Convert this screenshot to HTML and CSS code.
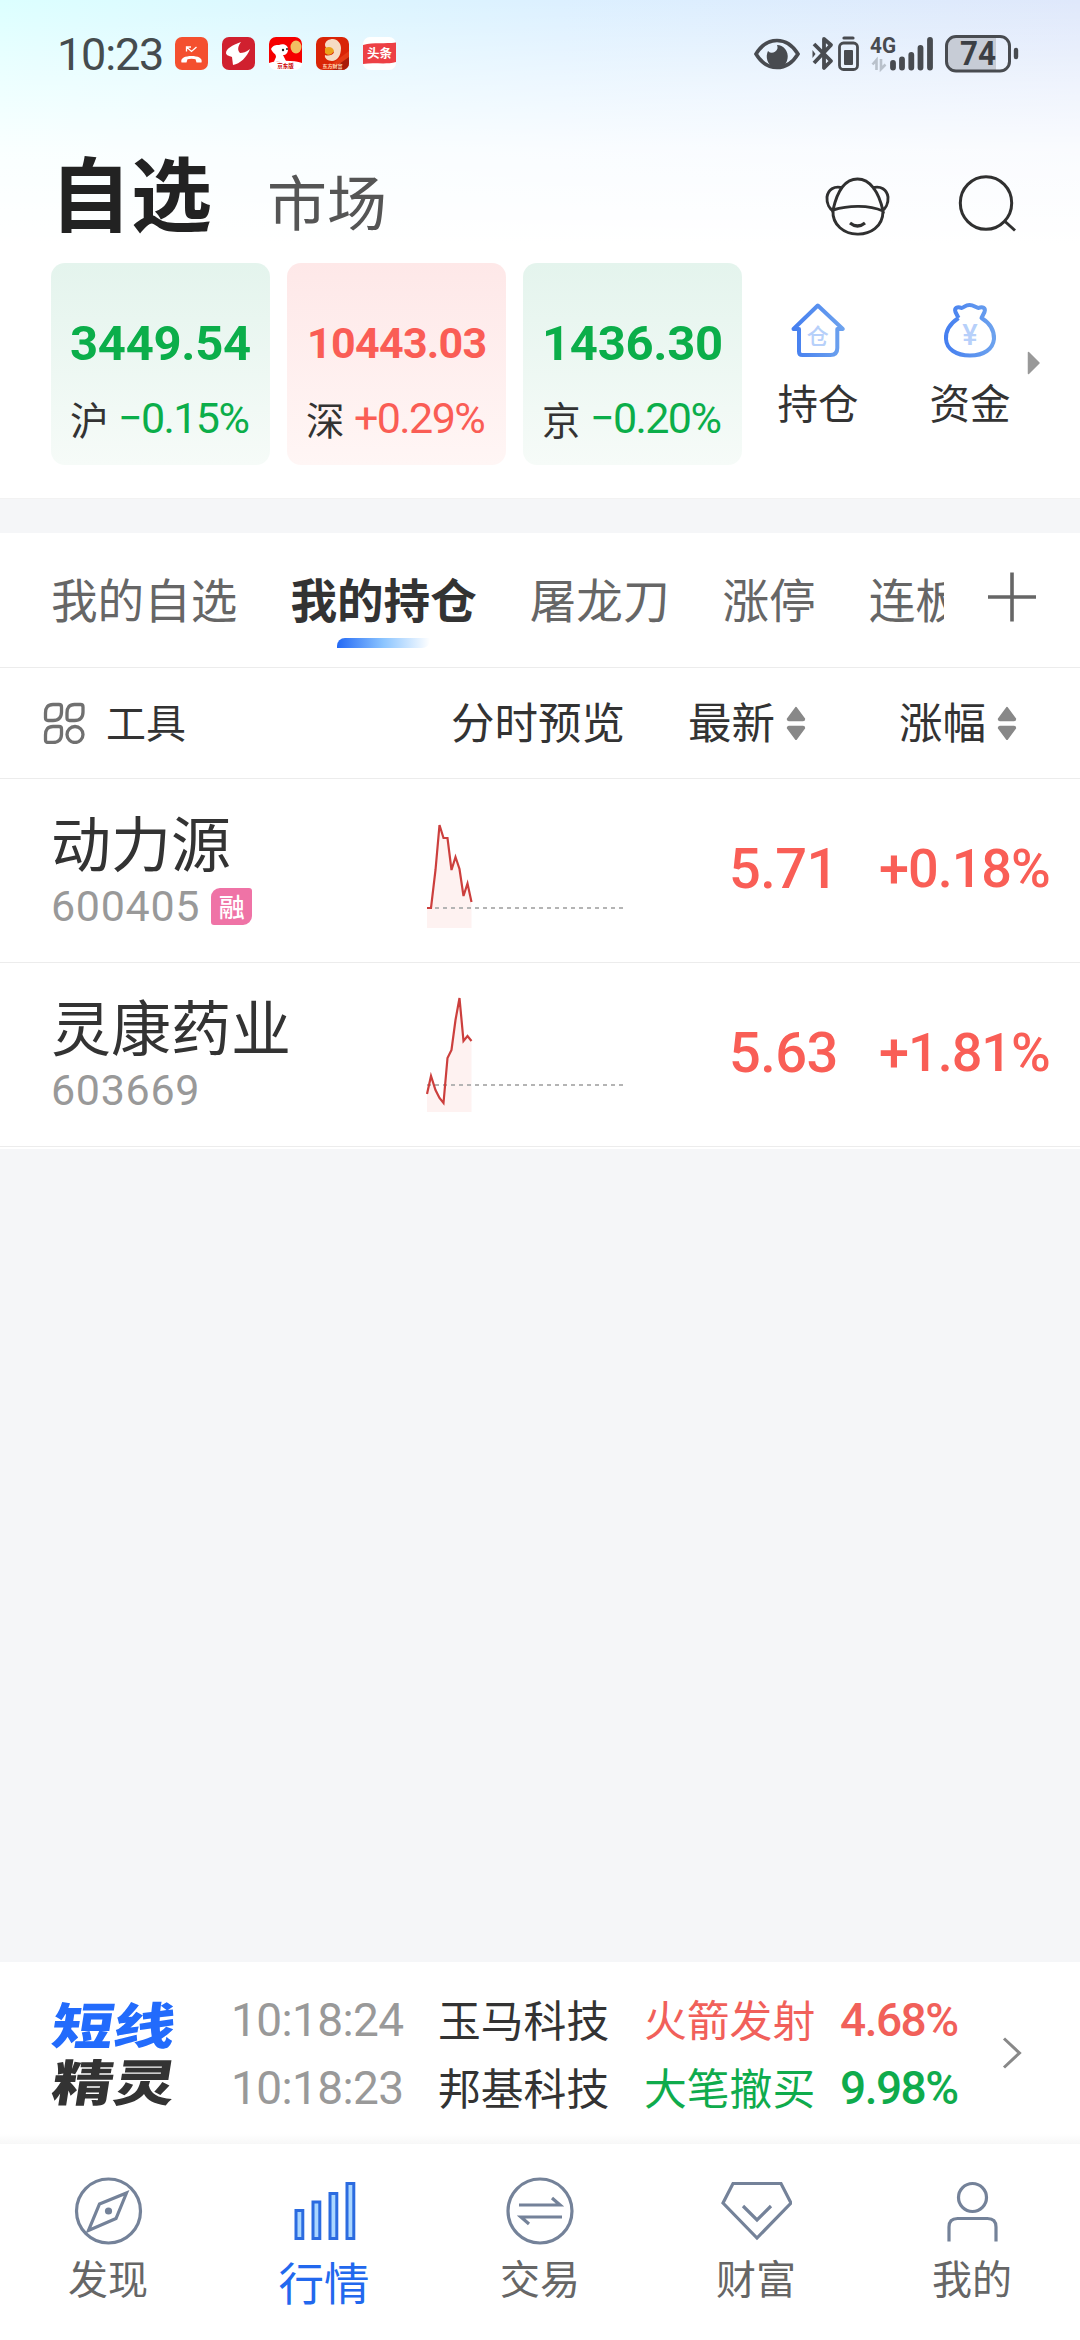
FILE: index.html
```html
<!DOCTYPE html>
<html lang="zh-CN">
<head>
<meta charset="utf-8">
<title>自选</title>
<link rel="stylesheet" href="styles.css">
</head>
<body>
<div class="app">
  <section class="top">
    <div class="status">
      <span class="clock num">10:23</span>
      <div class="notices">
        <svg width="33" height="33" viewBox="0 0 33 33"><rect width="33" height="33" rx="7" fill="#f4502f"/><path d="M11.5 14.500V10h4.500M12 10.500l4.500 4 5-4.500" fill="none" stroke="#fff" stroke-width="1.300"/><path d="M6.500 25.500c-1.500-4.500 4-6.500 10-6.500s11.500 2 10 6.500h-5l-1-3.200c-2-.8-6-.8-8 0l-1 3.200z" fill="#fff"/></svg>
        <svg width="33" height="33" viewBox="0 0 33 33"><rect width="33" height="33" rx="7" fill="#d0202f"/><path d="M19 5C10 8 4 12 4 16c0 2 3 3 6 4l1 8c7-1 14-8 17-16-4 3-7 4-10 4-3-3-2-7 1-11z" fill="#fff"/></svg>
        <svg width="33" height="33" viewBox="0 0 33 33"><rect width="33" height="33" rx="7" fill="#fff"/><path d="M0 26V7a7 7 0 0 1 7-7h19a7 7 0 0 1 7 7v19c-8-3-25-3-33 0z" fill="#f50000"/><path d="M2 12c2-4 5-4 8-4 4-2 9 0 9 4s-2 6-5 6l3 6H8l-2 2c-2-1 0-3 1-6 0-4-3-3-5-8z" fill="#fff"/><ellipse cx="27" cy="10" rx="5.500" ry="6.500" fill="#f2bf62"/><circle cx="14" cy="13" r="1.200" fill="#222"/><circle cx="18" cy="12" r="1" fill="#222"/><text x="16.500" y="30.500" class="logo-text" font-size="5.500" fill="#c00">京东版</text></svg>
        <svg width="33" height="33" viewBox="0 0 33 33"><rect width="33" height="33" rx="7" fill="#d92406"/><path d="M33 15v11a7 7 0 0 1-7 7h-9z" fill="#a91c08"/><path d="M33 14v6L16 32H9z" fill="#e43a14"/><path d="M9 8c0-4 4-6 8-6s8 4 8 9c0 8-4 13-9 13-4 0-8-3-7-6 2 1 8 1 9-3-2-3-9-2-9-7z" fill="#f6dcc4"/><path d="M9 11c4-2 8-1 9 3-2 4-6 5-9 2z" fill="#eba31c"/><text x="16.500" y="31" class="logo-text" font-size="5" fill="#ffd9b8">东方财富</text></svg>
        <svg width="33" height="33" viewBox="0 0 33 33"><rect width="33" height="33" rx="7" fill="#fff"/><path d="M0 8c11-3 22-1 33-2.500V25c-11 3-22 0-33 2z" fill="#ed4045"/><text x="16.500" y="21" class="logo-text" font-size="12.500" fill="#fff">头条</text></svg>
      </div>
      <svg class="sys" width="268" height="40" viewBox="752 34 268 40" fill="none" stroke="#484b50">
        <path d="M756 54c11-18 31-18 42 0-11 18-31 18-42 0z" stroke-width="3.600"/>
        <path d="M777 45a10.500 11.500 0 1 1-9 6 5.500 5.500 0 0 0 9-6z" fill="#484b50" stroke="none"/>
        <path d="M814 44l17 17-7 7V39l7 6-17 18" stroke-width="3.800" stroke-linejoin="round"/><path d="M812.500 50v8l3-4z" fill="#484b50" stroke="none"/>
        <rect x="839.500" y="43" width="18" height="26.500" rx="4" stroke-width="2.800"/><path d="M844 38h9" stroke-width="3.200" stroke-linecap="round"/><rect x="844" y="50" width="9" height="15" rx="1" fill="#484b50" stroke="none"/>
        <text x="870" y="53" class="net-text" font-size="22" fill="#484b50" stroke="none" textLength="26" lengthAdjust="spacingAndGlyphs">4G</text>
        <path d="M876.500 70V60l-4 4.500M881 59v10l4.500-4.500" stroke="#b9c1cb" stroke-width="2.600"/>
        <g stroke-width="5.800" stroke-linecap="round"><path d="M893 63v4.500M902 59.500v8M911.300 55v12.500M920.500 48v19.500M930 40v27.500"/></g>
        <path d="M954 37h42v33.500h-42q-7.500 0-7.500-8v-17q0-8.500 7.500-8.500z" fill="#c7ccd6" stroke="none"/>
        <rect x="946.500" y="36.500" width="63" height="34.500" rx="9.500" stroke-width="3"/><path d="M1016 50v7" stroke-width="4.400" stroke-linecap="round"/>
        <text x="960" y="65" class="net-text" font-size="33" fill="#3c3f44" stroke="none" textLength="36" lengthAdjust="spacingAndGlyphs">74</text>
      </svg>
    </div>
    <header class="header">
      <h1 class="title">自选</h1>
      <span class="subtitle">市场</span>
      <svg class="ic-face" width="66" height="62" viewBox="824 175 66 62" fill="none" stroke="#303030" stroke-width="2.900"><path d="M833 210c4-18 12-31 24.500-31S879 192 883 211c-14-6-34-6-50-1zM833 210c-2 31 50 33 50 1M843 188c-9-3-15 2-16 9-.500 7 3 12 6 14M872 188c9-3 15 2 16 9 .500 7-3 12-6 14"/><path d="M850 223q7.500 6 15 0" stroke-width="3.200"/></svg>
      <svg class="ic-search" width="58" height="58" viewBox="958 175 58 58" fill="none" stroke="#303030" stroke-width="3"><ellipse cx="986" cy="203" rx="25.700" ry="26.300"/><path d="M1004.500 221l10.500 9.500"/></svg>
    </header>
    <div class="indices">
      <div class="card down"><b class="num big">3449.54</b><div class="chg"><span class="mkt">沪</span><span class="num pct">−0.15%</span></div></div>
      <div class="card up"><b class="num big small">10443.03</b><div class="chg"><span class="mkt">深</span><span class="num pct">+0.29%</span></div></div>
      <div class="card down"><b class="num big">1436.30</b><div class="chg"><span class="mkt">京</span><span class="num pct">−0.20%</span></div></div>
      <div class="quick first">
        <svg width="56" height="58" viewBox="790 301 56 58" fill="none" stroke="url(#blue)" stroke-width="4" stroke-linejoin="round"><defs><linearGradient id="blue" gradientUnits="userSpaceOnUse" x1="792" y1="0" x2="844" y2="0"><stop stop-color="#447ef0"/><stop offset="1" stop-color="#6ea3ee"/></linearGradient></defs><path d="M817.800 305.500l25 23.500h-5.500v19q0 7-7 7h-28q-3.300 0-3.300-3.500V329h-5.500z"/><text x="817.800" y="343.500" class="mark" font-size="22">仓</text></svg>
        <span>持仓</span>
      </div>
      <div class="quick">
        <svg width="56" height="58" viewBox="942 301 56 58" fill="none" stroke="url(#blue2)" stroke-width="4" stroke-linejoin="round"><defs><linearGradient id="blue2" gradientUnits="userSpaceOnUse" x1="944" y1="0" x2="996" y2="0"><stop stop-color="#447ef0"/><stop offset="1" stop-color="#6ea3ee"/></linearGradient></defs><path d="M958.500 318l-3-6c-1.500-4 2-6 6-4 3-.500 3.500-3 8-3s5.500 2.500 9 3c4-2 7.500 0 6 4l-3 6c8 5 13 12 12.500 21-1 10-10 16.500-24 16.500s-23.500-6.500-24-16.500c-.500-9 5-16 12.500-21"/><text x="970" y="344.500" class="mark num" font-size="29">¥</text></svg>
        <span>资金</span>
      </div>
      <svg class="more" width="14" height="24" viewBox="0 0 14 24"><path d="M1.500 1.500v21L12 12z" fill="#999" stroke="#999" stroke-width="1.500" stroke-linejoin="round"/></svg>
    </div>
  </section>

  <nav class="tabs">
    <div class="tablist"><span>我的自选</span><span class="on">我的持仓</span><span>屠龙刀</span><span>涨停</span><span>连板</span></div>
    <svg width="50" height="50" viewBox="0 0 50 50"><path d="M1 25h48M25 .500v49" stroke="#666" stroke-width="3.600"/></svg>
  </nav>

  <div class="cols">
    <div class="tools"><svg width="42" height="42" viewBox="0 0 42 42" fill="none" stroke="#707070" stroke-width="3.300"><path id="leaf" d="M10 2.500h6q2.500 0 2.500 2.500v5q0 8.500-8.500 8.500H5q-2.500 0-2.500-2.500v-5q0-8.500 7.500-8.500z"/><use href="#leaf" x="21.500"/><use href="#leaf" y="22"/><circle cx="32" cy="32.500" r="8"/></svg><span>工具</span></div>
    <span class="preview">分时预览</span>
    <div class="sort">最新<svg width="20" height="34" viewBox="0 0 20 34"><path id="tri" d="M10 1.500L18.500 13q0 1.500-1.500 1.500H3q-1.500 0-1.500-1.500z" fill="#888" stroke="#888" stroke-width="1.400" stroke-linejoin="round"/><use href="#tri" transform="matrix(1 0 0 -1 0 35)"/></svg></div>
    <div class="sort last">涨幅<svg width="20" height="34" viewBox="0 0 20 34"><use href="#tri"/><use href="#tri" transform="matrix(1 0 0 -1 0 35)"/></svg></div>
  </div>

  <div class="stock">
    <div class="who"><div class="name">动力源</div><div class="code"><span class="num">600405</span><i class="tag">融</i></div></div>
    <svg class="spark" width="200" height="130" viewBox="426 810 200 130"><path d="M427 928V908h4l4.500-38 4-45 4 13h4l4 32 4-13 4 12 4 27 4-12.500 4 18.500v26z" fill="#fef2f1"/><path d="M427 908h197" stroke="#b4b4b4" stroke-width="2" stroke-dasharray="4 4"/><path d="M427 908h4l4.500-38 4-45 4 13h4l4 32 4-13 4 12 4 27 4-12.500 4 18.500" fill="none" stroke="#cc3f3d" stroke-width="2.200"/></svg>
    <span class="num price">5.71</span>
    <span class="num rate">+0.18%</span>
  </div>
  <div class="stock second">
    <div class="who"><div class="name">灵康药业</div><div class="code"><span class="num">603669</span></div></div>
    <svg class="spark" width="200" height="130" viewBox="426 994 200 130"><path d="M427 1112v-18l4-18 4.500 14 4 8 4 5 4-45 4-8 4-30 4-22 4 43 4-5 4 5v71z" fill="#fef2f1"/><path d="M427 1085h197" stroke="#b4b4b4" stroke-width="2" stroke-dasharray="4 4"/><path d="M427 1094l4-18 4.500 14 4 8 4 5 4-45 4-8 4-30 4-22 4 43 4-5 4 5" fill="none" stroke="#cc3f3d" stroke-width="2.200"/></svg>
    <span class="num price">5.63</span>
    <span class="num rate">+1.81%</span>
  </div>

  <div class="blank"></div>

  <section class="ticker">
    <div class="brand"><span class="b1">短线</span><span class="b2">精灵</span></div>
    <div class="feed">
      <div class="line"><span class="num time">10:18:24</span><span class="co">玉马科技</span><span class="ev red">火箭发射</span><span class="num val red">4.68%</span></div>
      <div class="line"><span class="num time">10:18:23</span><span class="co">邦基科技</span><span class="ev green">大笔撤买</span><span class="num val green">9.98%</span></div>
    </div>
    <svg class="chev" width="22" height="34" viewBox="0 0 22 34"><path d="M3 2.500L18.500 17 3 31.500" fill="none" stroke="#888" stroke-width="3"/></svg>
  </section>

  <nav class="bottom">
    <div class="item"><svg width="72" height="72" viewBox="0 0 72 72" fill="none" stroke="#748299" stroke-width="3.200"><circle cx="36.500" cy="36" r="32"/><path d="M54.500 18L44 43.500 16.500 55.500 27.500 29z"/><circle cx="36.500" cy="36" r="3.600" fill="#748299" stroke="none"/></svg><span>发现</span></div>
    <div class="item on"><svg width="72" height="72" viewBox="0 0 72 72" fill="#a9d6ff" stroke="#2b6be0" stroke-width="3"><path d="M8 35.500h6.800v28H8zM25 27h6.800v36.500H25zM42 18.500h6.800v45H42zM59 8.500h6.800v55H59z"/></svg><span>行情</span></div>
    <div class="item"><svg width="72" height="72" viewBox="0 0 72 72" fill="none" stroke="#748299" stroke-width="3.200"><circle cx="36" cy="36" r="32"/><path d="M15 30h41L48 23M58 42H17l8 7"/></svg><span>交易</span></div>
    <div class="item"><svg width="72" height="72" viewBox="0 0 72 72" fill="none" stroke="#748299" stroke-width="3.200"><path d="M13 8.500h48L71 28 37 63 3 28z"/><path d="M23 31l14 14 14-14"/></svg><span>财富</span></div>
    <div class="item"><svg width="72" height="72" viewBox="0 0 72 72" fill="none" stroke="#748299" stroke-width="3.200"><circle cx="36.500" cy="22.500" r="14"/><path d="M13 66.500V52q0-8.500 8.500-8.500h30q8.500 0 8.500 8.500v14.500"/></svg><span>我的</span></div>
  </nav>
</div>
</body>
</html>
```
FILE: styles.css
```css
* { box-sizing: border-box; }
body { margin: 0; background: #f5f6f8; }
.app {
  width: 1080px; height: 2340px; display: flex; flex-direction: column;
  font-family: "Noto Sans CJK SC", sans-serif; color: #333; background: #f5f6f8;
  overflow: hidden; white-space: nowrap; line-height: 1;
}
.num { font-family: Roboto, "Liberation Sans", sans-serif; }
svg { display: block; flex: none; }

.top {
  height: 499px; flex: none; display: flex; flex-direction: column;
  border-bottom: 1px solid #f2f2f2;
  background:
    linear-gradient(to bottom, rgba(255,255,255,0), rgba(255,255,255,.5) 85px, rgba(255,255,255,.84) 150px, #fff 245px),
    linear-gradient(to right, #dcffff 0, #dcf0ff 560px, #dfe8fb 1080px);
}
.status { height: 107px; display: flex; align-items: center; padding: 0 60px 0 57px; }
.clock { font-size: 45px; width: 118px; letter-spacing: -1.200px; color: #454c4e; padding-top: 2px; }
.notices { display: flex; gap: 14px; }
.logo-text { font-family: "Noto Sans CJK SC", sans-serif; font-weight: 700; text-anchor: middle; }
.net-text { font-family: Roboto, sans-serif; font-weight: 700; }
.sys { margin-left: auto; }

.header { height: 156px; display: flex; align-items: center; padding: 0 64px 0 50px; }
.title { margin: 0; font-size: 81px; font-weight: 700; color: #222; padding-top: 9px; }
.subtitle { font-size: 60px; color: #555; margin-left: 55px; padding-top: 30px; }
.header .ic-face { align-self: flex-start; margin: 68px 0 0 auto; }
.header .ic-search { align-self: flex-start; margin: 68px 0 0 68px; }

.indices { display: flex; align-items: flex-start; padding-left: 51px; }
.card { width: 219px; height: 202px; border-radius: 14px; margin-right: 17px; padding: 55px 0 0 19px; }
.card.down { background: linear-gradient(#e4f4ed, #f6fbf8); color: #0bae4a; }
.card.up { background: linear-gradient(#fee8e8, #fff6f5); color: #fa5d55; }
.big { display: block; height: 51px; line-height: 51px; font-size: 49px; letter-spacing: -.3px; }
.big.small { font-size: 43px; letter-spacing: -.700px; padding-left: 1px; }
.chg { display: flex; align-items: center; height: 50px; margin-top: 24px; line-height: 50px; }
.mkt { font-size: 38.500px; line-height: 48px; color: #333; width: 48px; }
.pct { font-size: 43px; letter-spacing: -1.600px; }
.quick { width: 120px; height: 202px; display: flex; flex-direction: column; align-items: center; padding-top: 38px; margin-left: 32px; }
.quick.first { margin-left: -1px; }
.quick span { font-size: 40.500px; line-height: 50px; margin-top: 18px; }
.mark { fill: #b7d0fa; stroke: none; text-anchor: middle; font-weight: 500; }
.more { margin: 88px 0 0 -3px; }

.tabs { height: 135px; flex: none; margin-top: 34px; background: #fff; border-bottom: 1px solid #ececec; display: flex; }
.tablist { width: 944px; overflow: hidden; display: flex; gap: 53px; padding-left: 51px; font-size: 46.600px; line-height: 130px; color: #666; }
.tablist span { flex: none; }
.tablist .on { display: flex; flex-direction: column; align-items: center; font-weight: 700; color: #333; }
.tablist .on::after {
  content: ""; width: 93px; height: 10px; margin-top: -25px; border-radius: 8px 0 8px 0;
  background: linear-gradient(to right, #2369f5, #8cc5ff 50%, #fff);
}
.tabs svg { margin: 39px 0 0 43px; }

.cols { height: 111px; flex: none; background: #fff; border-bottom: 1px solid #ececec; display: grid; grid-template-columns: 451px 237px 211px 1fr; align-items: center; font-size: 43.500px; line-height: 102px; padding-bottom: 4px; }
.tools { display: flex; align-items: center; gap: 21px; padding-left: 43px; font-size: 40px; }
.tools svg { margin-top: 4px; }
.sort svg { margin-top: 4px; }
.sort { display: flex; align-items: center; gap: 11px; }

.stock { height: 184px; flex: none; background: #fff; border-bottom: 1px solid #ececec; display: grid; grid-template-columns: 375px 303px 149px 1fr; padding-left: 51px; align-items: start; }
.who { padding-top: 31px; }
.name { font-size: 60px; line-height: 62px; }
.code { display: flex; align-items: center; gap: 11px; height: 38px; margin-top: 15px; font-size: 43px; letter-spacing: .700px; color: #999; }
.tag { width: 41px; height: 37px; border-radius: 9px 3px; background: #ef73a6; color: #fff; font: 500 26px/35px "Noto Sans CJK SC", sans-serif; text-align: center; letter-spacing: 0; }
.spark { margin-top: 31px; }
.price, .rate { line-height: 60px; margin-top: 60px; font-weight: 500; color: #f95e56; }
.price { font-size: 56px; letter-spacing: -.600px; }
.rate { font-size: 54px; letter-spacing: -1px; padding-left: 1px; }

.blank { flex: 1; border-top: 2px solid #fff; }

.ticker { height: 182px; flex: none; background: linear-gradient(#fff 172px, #f7f7f7); display: flex; align-items: flex-start; }
.brand { width: 178px; margin: 37px 0 0 53px; display: flex; flex-direction: column; font-weight: 900; font-size: 61.500px; gap: 10px; }
.brand span { line-height: 47px; height: 47px; transform: skewX(-9deg) scaleY(.8); width: 122px; }
.b1 { color: #226bfc; }
.b2 { color: #333; }
.feed { display: flex; flex-direction: column; padding-top: 24px; }
.line { height: 68px; display: grid; grid-template-columns: 207px 206px 196px 129px; font-size: 42.800px; line-height: 64px; }
.line .num { line-height: 69px; }
.time { font-size: 46px; color: #999; letter-spacing: -.600px; }
.val { font-size: 46px; font-weight: 500; letter-spacing: -1.500px; }
.red { color: #f1605a; }
.green { color: #0fab4c; }
.chev { margin: 74px 0 0 32px; }

.bottom { height: 196px; flex: none; background: #fff; display: grid; grid-template-columns: repeat(5, 1fr); }
.item { display: flex; flex-direction: column; align-items: center; padding-top: 31px; font-size: 40px; line-height: 50px; color: #666; }
.item span { margin-top: 5px; }
.item.on { color: #2268ee; font-size: 45.500px; }
.item.on span { margin-top: 9px; }
```
